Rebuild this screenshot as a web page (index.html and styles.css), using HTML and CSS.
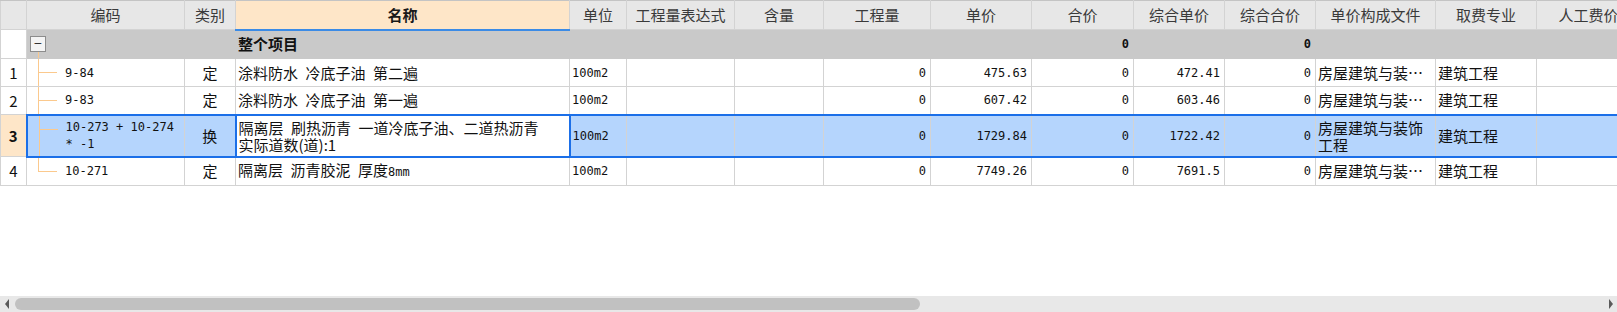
FILE: index.html
```html
<!DOCTYPE html>
<html lang="zh-CN">
<head>
  <meta charset="UTF-8">
  <title>分部分项</title>
  <link rel="stylesheet" href="styles.css">
</head>
<body>
  <div class="sheet">
    <table class="grid">
      <colgroup>
        <col class="w-no"><col class="w-code"><col class="w-type"><col class="w-name"><col class="w-unit">
        <col class="w-expr"><col class="w-hl"><col class="w-qty"><col class="w-price"><col class="w-sum">
        <col class="w-uprice"><col class="w-usum"><col class="w-file"><col class="w-major"><col class="w-labor">
      </colgroup>
      <thead>
        <tr class="head">
          <th></th>
          <th>编码</th>
          <th>类别</th>
          <th class="h-name">名称</th>
          <th>单位</th>
          <th>工程量表达式</th>
          <th>含量</th>
          <th>工程量</th>
          <th>单价</th>
          <th>合价</th>
          <th>综合单价</th>
          <th>综合合价</th>
          <th>单价构成文件</th>
          <th>取费专业</th>
          <th>人工费价</th>
        </tr>
      </thead>
      <tbody>
        <tr class="group">
          <td class="no"></td>
          <td class="code root"><span class="fold">−</span></td>
          <td></td>
          <td class="b">整个项目</td>
          <td></td><td></td><td></td><td></td><td></td>
          <td class="r num b">0</td>
          <td></td>
          <td class="r num b">0</td>
          <td></td><td></td><td></td>
        </tr>
        <tr class="row">
          <td class="no">1</td>
          <td class="code num">9-84</td>
          <td class="c">定</td>
          <td>涂料防水&ensp;冷底子油&ensp;第二遍</td>
          <td class="num">100m2</td>
          <td></td><td></td>
          <td class="r num">0</td>
          <td class="r num">475.63</td>
          <td class="r num">0</td>
          <td class="r num">472.41</td>
          <td class="r num">0</td>
          <td>房屋建筑与装…</td>
          <td>建筑工程</td>
          <td></td>
        </tr>
        <tr class="row">
          <td class="no">2</td>
          <td class="code num">9-83</td>
          <td class="c">定</td>
          <td>涂料防水&ensp;冷底子油&ensp;第一遍</td>
          <td class="num">100m2</td>
          <td></td><td></td>
          <td class="r num">0</td>
          <td class="r num">607.42</td>
          <td class="r num">0</td>
          <td class="r num">603.46</td>
          <td class="r num">0</td>
          <td>房屋建筑与装…</td>
          <td>建筑工程</td>
          <td></td>
        </tr>
        <tr class="row tall selected">
          <td class="no">3</td>
          <td class="code num wrap">10-273 + 10-274 * -1</td>
          <td class="c">换</td>
          <td class="current two">隔离层&ensp;刷热沥青&ensp;一道冷底子油、二道热沥青<br>实际道数(道):1</td>
          <td class="num">100m2</td>
          <td></td><td></td>
          <td class="r num">0</td>
          <td class="r num">1729.84</td>
          <td class="r num">0</td>
          <td class="r num">1722.42</td>
          <td class="r num">0</td>
          <td class="two">房屋建筑与装饰<br>工程</td>
          <td>建筑工程</td>
          <td></td>
        </tr>
        <tr class="row last">
          <td class="no">4</td>
          <td class="code num end">10-271</td>
          <td class="c">定</td>
          <td>隔离层&ensp;沥青胶泥&ensp;厚度<span class="num">8mm</span></td>
          <td class="num">100m2</td>
          <td></td><td></td>
          <td class="r num">0</td>
          <td class="r num">7749.26</td>
          <td class="r num">0</td>
          <td class="r num">7691.5</td>
          <td class="r num">0</td>
          <td>房屋建筑与装…</td>
          <td>建筑工程</td>
          <td></td>
        </tr>
      </tbody>
    </table>
  </div>

  <div class="hscroll">
    <span class="arrow-left"></span>
    <span class="thumb"></span>
    <span class="arrow-right"></span>
  </div>
</body>
</html>
```

FILE: styles.css
```css
body {
  margin: 0;
  font-family: "Noto Sans CJK SC", sans-serif;
  font-size: 15px;
  color: #111;
  background-color: #fff;
}
.sheet {
  width: 1617px;
  height: 296px;
  overflow: hidden;
}
.grid {
  border-collapse: collapse;
  table-layout: fixed;
  width: 1640px;
}
.w-no { width: 26px; }
.w-code { width: 158px; }
.w-type { width: 51px; }
.w-name { width: 334px; }
.w-unit { width: 57px; }
.w-expr { width: 108px; }
.w-hl { width: 89px; }
.w-qty { width: 107px; }
.w-price { width: 101px; }
.w-sum { width: 102px; }
.w-uprice { width: 91px; }
.w-usum { width: 91px; }
.w-file { width: 120px; }
.w-major { width: 101px; }
.w-labor { width: 104px; }

th, td {
  border: 1px solid #d3d3d3;
  padding: 0 2px;
  white-space: nowrap;
  overflow: hidden;
  line-height: 16px;
  text-align: left;
}
th {
  background-color: #e7e7e7;
  color: #3a3a3a;
  font-weight: normal;
  text-align: center;
  border-top-color: #c4c4c4;
}
.head { height: 29px; }
.h-name {
  background-color: #fee6c8;
  color: #1a1a1a;
  font-weight: bold;
  border-bottom: 2px solid #3b8be6;
}

.group { height: 29px; }
.group td { background-color: #c9c9c9; border-color: #c9c9c9; }
.group td.no { background-color: #fff; border-color: #d3d3d3; }
.row { height: 28px; }
.row.tall { height: 42px; }
.row.last { height: 29px; }

.no { text-align: center; padding: 0; }
.c { text-align: center; }
.r { text-align: right; padding-right: 4px; }
.b { font-weight: bold; }
.two { line-height: 17px; }
.num {
  font-family: "DejaVu Sans Mono", monospace;
  font-size: 12px;
}

/* tree column */
.code {
  position: relative;
  padding-left: 38px;
}
.code.wrap { white-space: normal; line-height: 17px; }
.code::before {
  content: "";
  position: absolute;
  left: 11px;
  top: 0;
  bottom: 0;
  border-left: 1px solid #fbc98d;
}
.code::after {
  content: "";
  position: absolute;
  left: 11px;
  top: 13px;
  width: 19px;
  border-top: 1px solid #fbc98d;
}
.code.end::before { bottom: auto; height: 14px; }
.code.root::before { top: 22px; }
.code.root::after { display: none; }
.fold {
  position: absolute;
  left: 3px;
  top: 6px;
  width: 14px;
  height: 14px;
  border: 1px solid #8c8c8c;
  background-color: #f4f4f4;
  color: #333;
  font-size: 14px;
  line-height: 13px;
  text-align: center;
}

/* selected row */
.selected td {
  background-color: #b5d5fd;
  border-top: 2px solid #1b6fe8;
  border-bottom: 2px solid #1b6fe8;
}
.selected td.no {
  background-color: #fee6c8;
  font-weight: bold;
  border-top: 1px solid #d3d3d3;
  border-bottom: 1px solid #d3d3d3;
}
.selected td.code { border-left: 2px solid #1b6fe8; }
.selected td.current {
  background-color: #fff;
  border: 2px solid #1b6fe8;
}

/* horizontal scroll bar */
.hscroll {
  height: 16px;
  background-color: #e8e8e8;
  display: flex;
  align-items: center;
  padding: 0 4px 0 5px;
}
.arrow-left, .arrow-right {
  width: 0;
  height: 0;
  border-top: 5px solid transparent;
  border-bottom: 5px solid transparent;
}
.arrow-left { border-right: 4px solid #5a5a5a; }
.arrow-right { border-left: 4px solid #5a5a5a; margin-left: auto; }
.thumb {
  width: 905px;
  height: 12px;
  margin-left: 6px;
  border-radius: 6px;
  background-color: #c1c1c1;
}
```
